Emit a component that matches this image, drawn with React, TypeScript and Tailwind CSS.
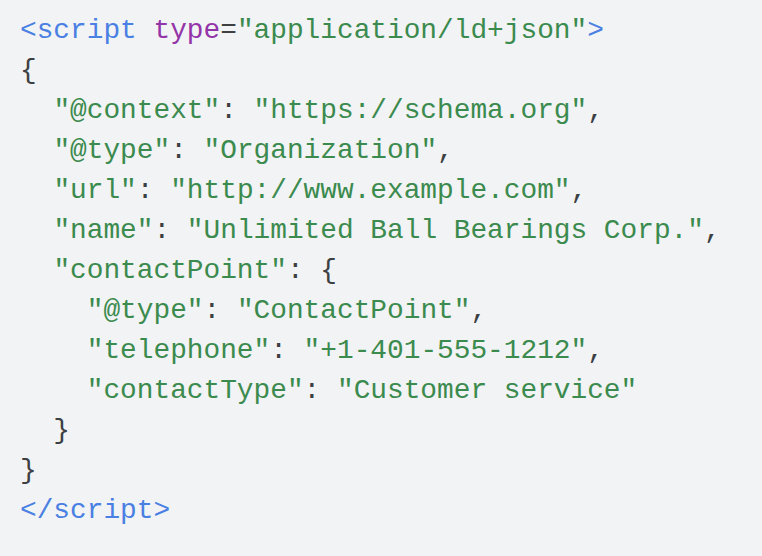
const B = 'text-[#4a7fe3]';
const P = 'text-[#9334a8]';
const G = 'text-[#3b8a4e]';
const D = 'text-[#3c4043]';

type Seg = [string, string];

const lines: Seg[][] = [
  [[B, '<script '], [P, 'type'], [D, '='], [G, '"application/ld+json"'], [B, '>']],
  [[D, '{']],
  [[D, '  '], [G, '"@context"'], [D, ': '], [G, '"https://schema.org"'], [D, ',']],
  [[D, '  '], [G, '"@type"'], [D, ': '], [G, '"Organization"'], [D, ',']],
  [[D, '  '], [G, '"url"'], [D, ': '], [G, '"http://www.example.com"'], [D, ',']],
  [[D, '  '], [G, '"name"'], [D, ': '], [G, '"Unlimited Ball Bearings Corp."'], [D, ',']],
  [[D, '  '], [G, '"contactPoint"'], [D, ': {']],
  [[D, '    '], [G, '"@type"'], [D, ': '], [G, '"ContactPoint"'], [D, ',']],
  [[D, '    '], [G, '"telephone"'], [D, ': '], [G, '"+1-401-555-1212"'], [D, ',']],
  [[D, '    '], [G, '"contactType"'], [D, ': '], [G, '"Customer service"']],
  [[D, '  }']],
  [[D, '}']],
  [[B, '</script>']],
];

export default function App() {
  return (
    <div className="min-h-[556px] w-[762px] bg-[#f1f3f4] px-[20px] pt-[11px]">
      <pre className="m-0 font-['Liberation_Mono',monospace] text-[27.8px] leading-[40px] whitespace-pre">
        {lines.map((segs, i) => (
          <div key={i}>
            {segs.map(([c, t], j) => (
              <span key={j} className={c}>
                {t}
              </span>
            ))}
          </div>
        ))}
      </pre>
    </div>
  );
}
